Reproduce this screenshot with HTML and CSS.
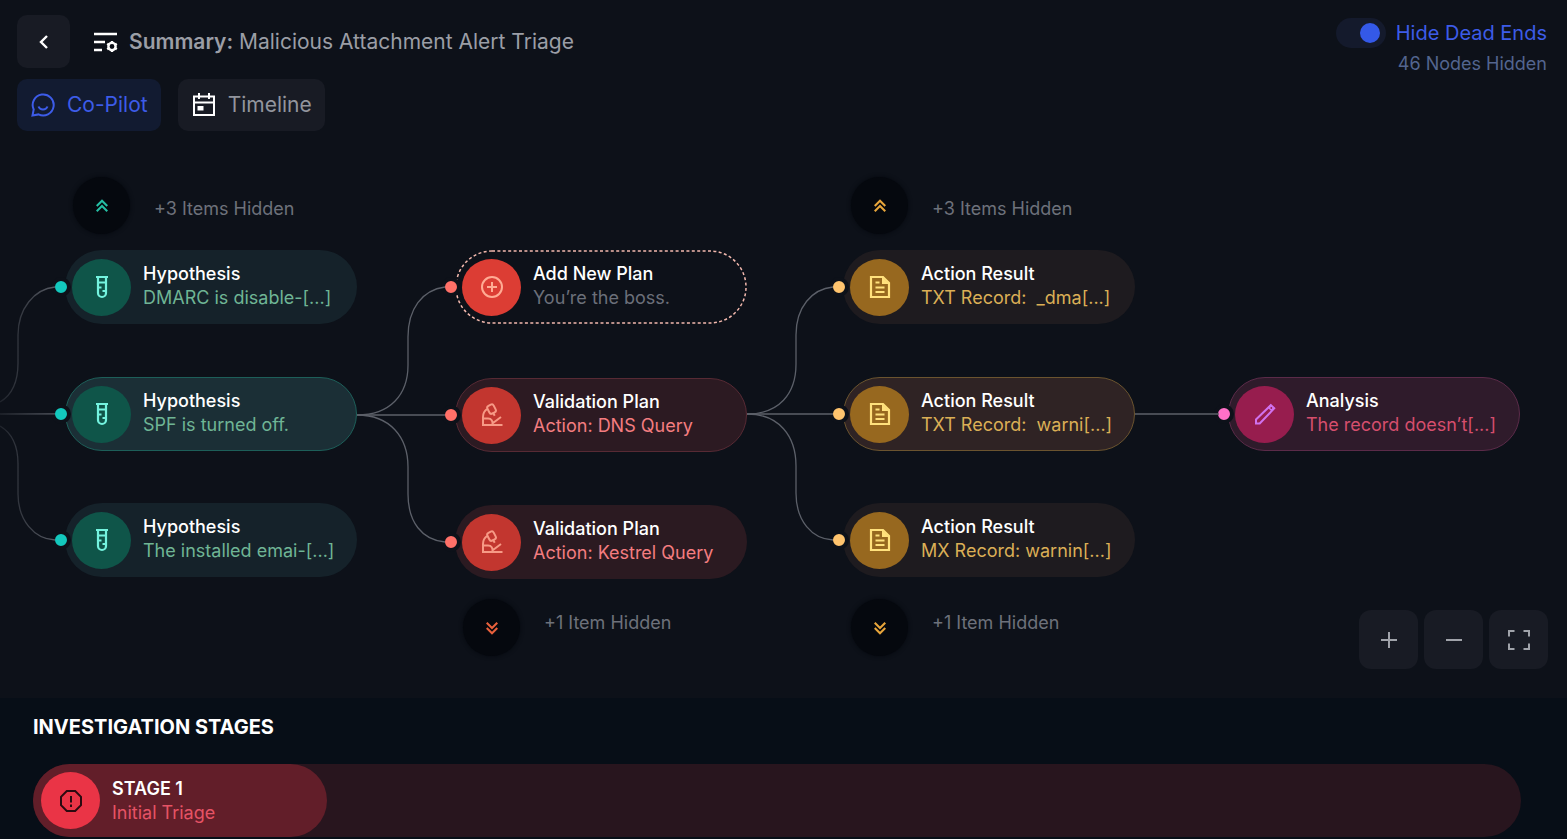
FILE: index.html
```html
<!DOCTYPE html>
<html lang="en">
<head>
<meta charset="utf-8">
<meta name="viewport" content="width=device-width, initial-scale=1">
<title>Malicious Attachment Alert Triage</title>
<link rel="stylesheet" href="styles.css">
</head>
<body>
<svg class="sprite" aria-hidden="true">
  <symbol id="tube" viewBox="0 0 24 24"><path d="M6 2h12M8 2v16a4 4 0 0 0 8 0V2M8 7.500h8M8 12.500h3.500M12.500 16H16" stroke-width="2.200" /></symbol>
  <symbol id="doc" viewBox="0 0 24 24"><path d="M3 2h12l6 6v14H3zM7.500 12.500h9M7.500 17h9M7.500 7.500h4" stroke-width="2.200" /><path d="M14 2v7h7z" fill="currentColor" stroke="none" /></symbol>
  <symbol id="scope" viewBox="0 0 24 24"><path d="M2 22h20.500M3 22v-8c0-3.500 1.200-6 4-8M3 15.500h5c3.500 0 5 2.500 4.500 6.500M13 20l8-6M13.500 10.500l1.200 2.200" /><rect x="8" y="1.800" width="7" height="8.600" rx="2.200" transform="rotate(-27 11.500 6)" /></symbol>
  <symbol id="up" viewBox="0 0 16 16"><path d="M2 8l6-6 6 6M2 14l6-6 6 6" /></symbol>
  <symbol id="down" viewBox="0 0 16 16"><path d="M2 2l6 6 6-6M2 8l6 6 6-6" /></symbol>
</svg>

<main class="board">
  <header class="header">
    <div class="header-left">
      <div class="title-row">
        <button class="back" type="button" aria-label="Back"><svg class="i14" viewBox="0 0 14 14"><path d="M10 1L4 7l6 6" /></svg></button>
        <svg class="i24 summary-icon" viewBox="0 0 24 24"><path d="M0 4h23M0 12h11M0 20h8" /><path d="M18 11v2M18 20v2M13.200 13.700l2 1.200M20.800 18.100l2 1.200M13.200 19.300l2-1.200M20.800 14.900l2-1.200" /><circle cx="18" cy="16.500" r="3.600" /></svg>
        <h1 class="title"><strong>Summary:</strong> Malicious Attachment Alert Triage</h1>
      </div>
      <nav class="tabs">
        <button class="tab tab-active" type="button"><svg class="i24" viewBox="0 0 24 24"><path d="M1.500 22.500l1.200-6A10.500 10.500 0 1 1 7.500 21.400zM7.500 13.500c1.500 4 7.500 4 9 0" /></svg>Co-Pilot</button>
        <button class="tab" type="button"><svg class="i24 calendar" viewBox="0 0 24 24"><path d="M2 3.500h20v18.500H2zM2 9.500h20M7 0v6M17 0v6" /><path d="M5.500 13h6v4.500h-6z" fill="currentColor" stroke="none" /></svg>Timeline</button>
      </nav>
    </div>
    <div class="filter">
      <label class="switch"><input type="checkbox" checked>Hide Dead Ends</label>
      <p class="filter-note">46 Nodes Hidden</p>
    </div>
  </header>

  <section class="canvas" aria-label="Investigation graph">
    <svg class="links" aria-hidden="true">
      <defs><linearGradient id="fade" gradientUnits="userSpaceOnUse" x1="0" y1="0" x2="60" y2="0"><stop offset="0" stop-color="#20242c" /><stop offset="1" stop-color="#5c6069" /></linearGradient></defs>
      <g stroke="url(#fade)">
        <path d="M0 271C12 264 18 250 18 232V204C18 178 34 158 55 156" />
        <path d="M0 283L55 282.900" />
        <path d="M0 295C12 302 18 315 18 333V363C18 389 34 408 55 409" />
      </g>
      <path d="M357 284C390 284 408 264 408 234V206C408 178 422 159 445 156" />
      <path d="M357 284H445" />
      <path d="M357 284C390 284 408 306 408 336V363C408 391 422 409 445 411" />
      <path d="M747 283C779 283 796 263 796 233V204C796 176 812 158 833 156" />
      <path d="M747 283H833" />
      <path d="M747 283C779 283 796 305 796 335V362C796 390 812 408 833 409" />
      <path d="M1135 283H1219" />
    </svg>

    <div class="more teal col-1 above"><button class="more-btn" type="button" aria-label="Show items above"><svg class="i14"><use href="#up" /></svg></button><span>+3 Items Hidden</span></div>
    <button class="node teal col-1 row-1" type="button"><span class="port"></span><span class="disc"><svg class="i24"><use href="#tube" /></svg></span><span class="text"><span>Hypothesis</span><span class="detail">DMARC is disable-[...]</span></span></button>
    <button class="node teal selected col-1 row-2" type="button"><span class="port"></span><span class="disc"><svg class="i24"><use href="#tube" /></svg></span><span class="text"><span>Hypothesis</span><span class="detail">SPF is turned off.</span></span></button>
    <button class="node teal col-1 row-3" type="button"><span class="port"></span><span class="disc"><svg class="i24"><use href="#tube" /></svg></span><span class="text"><span>Hypothesis</span><span class="detail">The installed emai-[...]</span></span></button>

    <button class="node red add col-2 row-1" type="button"><svg class="outline" aria-hidden="true"><rect x="1" y="1" width="290" height="72" rx="36" /></svg><span class="port"></span><span class="disc"><svg class="i24" viewBox="0 0 24 24"><circle cx="12" cy="12" r="10" /><path d="M12 7v10M7 12h10" /></svg></span><span class="text"><span>Add New Plan</span><span class="detail">You’re the boss.</span></span></button>
    <button class="node red selected col-2 row-2" type="button"><span class="port"></span><span class="disc"><svg class="i24"><use href="#scope" /></svg></span><span class="text"><span>Validation Plan</span><span class="detail">Action: DNS Query</span></span></button>
    <button class="node red col-2 row-3" type="button"><span class="port"></span><span class="disc"><svg class="i24"><use href="#scope" /></svg></span><span class="text"><span>Validation Plan</span><span class="detail">Action: Kestrel Query</span></span></button>
    <div class="more red col-2 below"><button class="more-btn" type="button" aria-label="Show items below"><svg class="i14"><use href="#down" /></svg></button><span>+1 Item Hidden</span></div>

    <div class="more amber col-3 above"><button class="more-btn" type="button" aria-label="Show items above"><svg class="i14"><use href="#up" /></svg></button><span>+3 Items Hidden</span></div>
    <button class="node amber col-3 row-1" type="button"><span class="port"></span><span class="disc"><svg class="i24"><use href="#doc" /></svg></span><span class="text"><span>Action Result</span><span class="detail">TXT Record:&nbsp; _dma[...]</span></span></button>
    <button class="node amber selected col-3 row-2" type="button"><span class="port"></span><span class="disc"><svg class="i24"><use href="#doc" /></svg></span><span class="text"><span>Action Result</span><span class="detail">TXT Record:&nbsp; warni[...]</span></span></button>
    <button class="node amber col-3 row-3" type="button"><span class="port"></span><span class="disc"><svg class="i24"><use href="#doc" /></svg></span><span class="text"><span>Action Result</span><span class="detail">MX Record: warnin[...]</span></span></button>
    <div class="more amber col-3 below"><button class="more-btn" type="button" aria-label="Show items below"><svg class="i14"><use href="#down" /></svg></button><span>+1 Item Hidden</span></div>

    <button class="node pink selected col-4 row-2" type="button"><span class="port"></span><span class="disc"><svg class="i24" viewBox="0 0 24 24"><path d="M3 21.500v-4L17.800 3.200l3.400 3.200L6.700 21.500z" /><path d="M14.500 5.500l3.300-3.200 4.200 4-3.300 3.200z" fill="currentColor" stroke="none" /><circle cx="18.300" cy="6" r="0.900" fill="#971d4e" stroke="none" /></svg></span><span class="text"><span>Analysis</span><span class="detail">The record doesn’t[...]</span></span></button>

    <div class="zoom">
      <button class="zoom-btn" type="button" aria-label="Zoom in"><svg class="i24" viewBox="0 0 24 24"><path d="M12 4v16M4 12h16" /></svg></button>
      <button class="zoom-btn" type="button" aria-label="Zoom out"><svg class="i24" viewBox="0 0 24 24"><path d="M4 12h16" /></svg></button>
      <button class="zoom-btn" type="button" aria-label="Fit to screen"><svg class="i24" viewBox="0 0 24 24"><path d="M2 8.500V3h5.500M16.500 3H22v5.500M22 15.500V21h-5.500M7.500 21H2v-5.500" /></svg></button>
    </div>
  </section>
</main>

<section class="stages">
  <h2 class="stages-title">INVESTIGATION STAGES</h2>
  <div class="track">
    <button class="stage" type="button"><span class="disc"><svg class="i24" viewBox="0 0 24 24"><path d="M7.800 2h8.400L22 7.800v8.400L16.200 22H7.800L2 16.200V7.800zM12 7v6.500M12 15.500v2.500" /></svg></span><span class="text"><strong>STAGE 1</strong><span class="detail">Initial Triage</span></span></button>
  </div>
</section>
</body>
</html>
```

FILE: styles.css
```css
* { box-sizing: border-box; }

body {
  margin: 0;
  min-height: 100vh;
  display: flex;
  flex-direction: column;
  background: #0d1119;
  color: #fff;
  font-family: Inter, "Liberation Sans", sans-serif;
  font-size: 18px;
  line-height: 24px;
}

button {
  border: 0;
  padding: 0;
  color: inherit;
  font: inherit;
  text-align: left;
  cursor: pointer;
}

h1, h2, p { margin: 0; }

svg {
  display: block;
  flex: none;
  fill: none;
  stroke: currentColor;
  stroke-width: 2;
}

.sprite { position: absolute; width: 0; height: 0; }
.i24 { width: 24px; height: 24px; }
.i14 { width: 14px; height: 14px; stroke-width: 2.4; }

.board { flex: 1; display: flex; flex-direction: column; }

/* Header */
.header {
  display: flex;
  justify-content: space-between;
  padding: 15px 20px 0 17px;
}
.header-left { display: flex; flex-direction: column; gap: 11px; }
.title-row { display: flex; align-items: center; }
.back, .zoom-btn {
  display: flex;
  align-items: center;
  justify-content: center;
  background: #181b24;
}
.back { width: 53px; height: 53px; border-radius: 10px; }
.summary-icon { margin: 0 11px 0 24px; stroke-width: 2.4; }
.title { color: #9b9ea6; font-size: 21px; font-weight: 400; }
.title strong { font-weight: 600; }

.tabs { display: flex; gap: 17px; }
.tab {
  display: flex;
  align-items: center;
  gap: 12px;
  height: 52px;
  padding: 0 13px 0 14px;
  border-radius: 10px;
  background: #181b24;
  color: #92959d;
  font-size: 21px;
}
.tab-active { background: #121b31; color: #3d5ce8; }
.calendar { color: #fff; }

.filter {
  display: flex;
  flex-direction: column;
  align-items: flex-end;
  gap: 4px;
  padding-top: 3px;
}
.switch {
  display: flex;
  align-items: center;
  gap: 10px;
  color: #3d5ce8;
  font-size: 20px;
}
.switch input {
  appearance: none;
  display: flex;
  align-items: center;
  justify-content: flex-end;
  width: 50px;
  height: 30px;
  margin: 0;
  padding-right: 6px;
  border-radius: 15px;
  background: #141a2c;
}
.switch input::before {
  content: "";
  width: 20px;
  height: 20px;
  border-radius: 50%;
  background: #3459e8;
}
.filter-note { color: #53658f; }

/* Graph canvas */
.canvas { position: relative; flex: 1; min-height: 560px; overflow: hidden; }
.links {
  position: absolute;
  z-index: 1;
  inset: 0;
  width: 100%;
  height: 100%;
  pointer-events: none;
  stroke: #5c6069;
  stroke-width: 1.3;
}

.node {
  position: absolute;
  display: flex;
  align-items: center;
  gap: 12px;
  width: 292px;
  height: 74px;
  padding: 0 6px;
  border: 1px solid transparent;
  border-radius: 37px;
  background: var(--pill) border-box;
}
.node.selected { background: var(--pill-on); border-color: var(--edge); }
.disc {
  display: flex;
  align-items: center;
  justify-content: center;
  flex: none;
  width: 59px;
  height: 57px;
  border-radius: 50%;
  background: var(--disc);
  color: var(--icon);
}
.text { display: flex; flex-direction: column; white-space: nowrap; }
.node .text { padding-bottom: 3px; font-weight: 500; }
.node .detail { color: var(--detail); font-weight: 400; }
.port {
  position: absolute;
  left: -15px;
  top: 26px;
  width: 20px;
  height: 20px;
  border: 4px solid #0d1119;
  border-radius: 50%;
  background: var(--port);
}

.teal { --pill: #15222a; --pill-on: #1b2f36; --edge: #1d5f59; --disc: #0f5549; --icon: #74f3df; --detail: #6fb595; --port: #13c8bd; --arrow: #25bfa5; }
.red { --pill: #2b1a21; --pill-on: #2c1a22; --edge: #572a34; --disc: #c2362f; --icon: #f79a86; --detail: #f47d80; --port: #ff7068; --arrow: #e8603c; }
.amber { --pill: #1e1b1f; --pill-on: #2f2324; --edge: #6b542f; --disc: #97681f; --icon: #ffe17c; --detail: #dbaf56; --port: #ffc46e; --arrow: #e8a53b; }
.pink { --pill-on: #2f1b2b; --edge: #5b2b49; --disc: #971d4e; --icon: #d072ee; --detail: #d64e6d; --port: #ff70c8; }
.add { --pill: transparent; --disc: #dc3d34; --icon: #ffab94; --detail: #6b6f79; }

.outline {
  position: absolute;
  inset: -1px;
  width: 292px;
  height: 74px;
  stroke: #f3b9ae;
  stroke-width: 1.5;
  stroke-dasharray: 3 2.4;
}

.more {
  position: absolute;
  display: flex;
  align-items: center;
  gap: 24px;
  padding-left: 8px;
  color: #6d717b;
}
.more-btn {
  display: flex;
  align-items: center;
  justify-content: center;
  width: 57px;
  height: 57px;
  border-radius: 50%;
  background: #05080e;
  box-shadow: 0 0 4px #05080e;
  color: var(--arrow);
}
.above { top: 46px; }
.above span { padding-top: 6px; }
.below { top: 468px; }
.below span { padding-bottom: 10px; }

.col-1 { left: 65px; }
.col-2 { left: 455px; }
.col-3 { left: 843px; }
.col-4 { left: 1228px; }
.row-1 { top: 119px; }
.row-2 { top: 246px; }
.row-3 { top: 372px; }
.col-2.row-2 { top: 247px; }
.col-2.row-3 { top: 374px; }

.zoom { position: absolute; right: 19px; bottom: 29px; display: flex; gap: 6px; }
.zoom-btn { width: 59px; height: 59px; border-radius: 12px; color: #a0a3aa; }

/* Stages */
.stages {
  display: flex;
  flex-direction: column;
  gap: 25px;
  padding: 17px 46px 2px 33px;
  background: #070e17;
}
.stages-title { font-size: 20px; font-weight: 700; }
.track { border-radius: 37px; background: #28151e; }
.stage {
  display: flex;
  align-items: center;
  gap: 12px;
  width: 294px;
  height: 73px;
  padding: 0 8px;
  border-radius: 37px;
  background: #621e29;
}
.stage .disc { --disc: #ea3446; --icon: #2b0a10; }
.stage strong { font-weight: 600; }
.stage .detail { color: #e65365; }
```
